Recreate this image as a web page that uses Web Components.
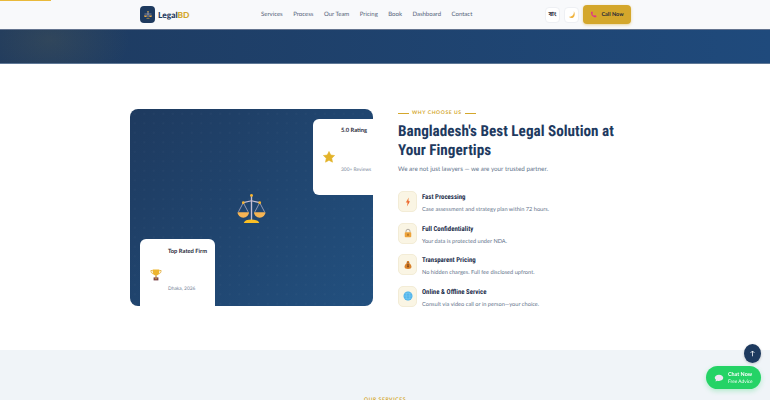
<!DOCTYPE html>
<html lang="en">
<head>
<meta charset="utf-8">
<title>LegalBD</title>
<style>
html, body { margin: 0; padding: 0; height: 400px; overflow: hidden; background: #fff; }
body { font-family: Lato, "Noto Sans", "Noto Sans Bengali", sans-serif; color: #1e3a5f; text-rendering: geometricPrecision; }
</style>
</head>
<body>
<site-header></site-header>
<page-hero></page-hero>
<why-section>
  <feature-row title="Fast Processing" text="Case assessment and strategy plan within 72 hours.">
    <svg viewBox="0 0 20 20" width="10" height="10"><path d="M11.500 1 5.500 11h3.600L7.800 19l6.400-10.600h-3.600z" fill="#f0803c"/><path d="M10.500 6 8.800 10.600h1.600L9.600 14.500l2.600-5h-1.600z" fill="#e8452c"/></svg>
  </feature-row>
  <feature-row title="Full Confidentiality" text="Your data is protected under NDA.">
    <svg viewBox="0 0 20 20" width="10" height="10"><path d="M6 9V6.500a4 4 0 0 1 8 0V9" fill="none" stroke="#a9a29a" stroke-width="1.800"/><rect x="3.500" y="8.500" width="13" height="10" rx="1.500" fill="#eda33a"/><rect x="9" y="11.500" width="2" height="4" fill="#8a5a20"/></svg>
  </feature-row>
  <feature-row title="Transparent Pricing" text="No hidden charges. Full fee disclosed upfront.">
    <svg viewBox="0 0 20 20" width="10" height="10"><path d="M7.500 2h5l-1.300 3.400c3.400 1.600 5.800 5 5.800 8.100 0 3.200-2.700 4.500-7 4.500s-7-1.300-7-4.500c0-3.100 2.400-6.500 5.800-8.100z" fill="#d9822b"/><rect x="7.200" y="4.800" width="5.600" height="1.400" fill="#8f4f1e"/><path d="M10 8v7M8 10h4M8 13h4" stroke="#6b3a15" stroke-width="1.200"/></svg>
  </feature-row>
  <feature-row title="Online &amp; Offline Service" text="Consult via video call or in person—your choice.">
    <svg viewBox="0 0 20 20" width="10" height="10"><circle cx="10" cy="10" r="9" fill="#4fb3ea"/><path d="M1 10h18M10 1c-5 5-5 13 0 18M10 1c5 5 5 13 0 18M3 5.500h14M3 14.500h14" fill="none" stroke="#8ad2f5" stroke-width="1"/></svg>
  </feature-row>
</why-section>
<services-strip></services-strip>
<float-actions></float-actions>

<template id="header-tpl">
  <style>
    :host { display: block; height: 29px; background: #f8f9fb; position: relative; }
    .progress { position: absolute; left: 0; top: 0; width: 51px; height: 1px; background: #e9b93a; }
    .bar { height: 100%; box-sizing: border-box; padding: 0 139px 0 140px; display: flex; align-items: center; }
    .logo { display: flex; align-items: center; gap: 3px; width: 49px; font-size: 8.400px; font-weight: 900; color: #1e3a5f; }
    .logo b { color: #d4a72c; font-weight: 900; }
    .mark { flex: none; width: 15px; height: 17px; border-radius: 4px; background: #1e3a5f; display: flex; align-items: center; justify-content: center; }
    nav { display: flex; gap: 10.500px; margin-left: 72px; font-size: 6px; color: #55637a; }
    .tools { margin-left: auto; display: flex; align-items: center; gap: 4px; }
    .tool { width: 15px; height: 16px; box-sizing: border-box; border: 1px solid #eef0f4; border-radius: 4px; background: #fff; display: flex; align-items: center; justify-content: center; font-size: 6px; font-weight: 700; color: #1f2937; font-family: "Noto Sans Bengali", "Noto Sans", sans-serif; }
    .call { height: 19px; width: 48px; box-sizing: border-box; border-radius: 4px; background: #d4a72c; box-shadow: 0 1px 3px rgba(212,167,44,.45); display: flex; align-items: center; justify-content: center; gap: 4px; font-size: 5.500px; font-weight: 700; color: #1f2937; }
  </style>
  <div class="progress"></div>
  <div class="bar">
    <div class="logo">
      <span class="mark"><svg viewBox="0 0 20 20" width="10" height="10"><path d="M10 3v11" stroke="#cfc6d8" stroke-width="1.200"/><circle cx="10" cy="3.500" r="1.300" fill="#f2b63a"/><path d="M3 8h14" stroke="#cfc6d8" stroke-width="1"/><path d="M2 11h6a3 3 0 0 1-6 0zM12 11h6a3 3 0 0 1-6 0z" fill="#f2b14a"/><path d="M6 17q4-3 8 0z" fill="#f2b63a"/></svg></span>
      <span>Legal<b>BD</b></span>
    </div>
    <nav><span>Services</span><span>Process</span><span>Our Team</span><span>Pricing</span><span>Book</span><span>Dashboard</span><span>Contact</span></nav>
    <div class="tools">
      <span class="tool">বাং</span>
      <span class="tool"><svg viewBox="0 0 20 20" width="9" height="9"><path d="M15 2c1.500 6-2 13-11 13 3 3 7 3.500 10 1.500 4-2.500 4-10 1-14.500z" fill="#f0b23c"/></svg></span>
      <span class="call"><svg viewBox="0 0 20 20" width="7" height="7"><path d="M3 2.500 6.500 1.500 8.500 6 6.500 7.800c.8 2.500 2.700 4.700 5.500 5.700L14 11.500 18.500 14 17.500 17.500C9 19 2 11 3 2.500z" fill="#e0338a"/></svg>Call Now</span>
    </div>
  </div>
</template>

<template id="hero-tpl">
  <style>
    :host { display: block; height: 35px; box-sizing: border-box; border-top: 1px solid #64748f; border-bottom: 1px solid #5f7896;
      background: radial-gradient(ellipse 80px 50px at 50px 10px, rgba(212,167,44,.1), transparent), linear-gradient(90deg, #1e3a5f 0%, #1f4a7c 100%); }
  </style>
</template>

<template id="why-tpl">
  <style>
    :host { display: block; height: 286px; box-sizing: border-box; padding: 45px 130px 0; background: #fff; }
    .grid { display: grid; grid-template-columns: 243px 1fr; gap: 25px; align-items: start; }
    .eyebrow { display: flex; align-items: center; gap: 3px; height: 8px; font-size: 5px; font-weight: 700; letter-spacing: .6px; color: #d4a72c; }
    .eyebrow i { display: block; width: 11px; height: 1px; background: #d4a72c; }
    h2 { margin: 5px 0 0; font-family: "Roboto Condensed", Lato, sans-serif; font-size: 15.200px; line-height: 19px; font-weight: 700; color: #1e3a5f; }
    p { margin: 5px 0 16px; font-size: 6.300px; line-height: 10px; color: #64748b; }
    .list { display: flex; flex-direction: column; gap: 10.500px; }
  </style>
  <div class="grid">
    <proof-visual></proof-visual>
    <div>
      <div class="eyebrow"><i></i>WHY CHOOSE US<i></i></div>
      <h2>Bangladesh's Best Legal Solution at Your Fingertips</h2>
      <p>We are not just lawyers — we are your trusted partner.</p>
      <div class="list"><slot></slot></div>
    </div>
  </div>
</template>

<template id="visual-tpl">
  <style>
    :host { display: block; height: 197px; position: relative; overflow: hidden; border-radius: 8px;
      background-color: #1f4373;
      background-image: radial-gradient(circle, rgba(255,255,255,.035) .6px, transparent .8px), linear-gradient(135deg, #1e3a5f 0%, #22507f 100%);
      background-size: 9.500px 9.500px, 100% 100%; }
    .center { height: 100%; display: flex; align-items: center; justify-content: center; }
    .tag { position: absolute; box-sizing: border-box; background: #fff; display: flex; align-items: center; gap: 6px; }
    .rating { right: 0; top: 10px; width: 60px; height: 76px; border-radius: 6px 0 0 6px; padding: 0 2px 0 10px; }
    .firm { left: 10px; bottom: 0; width: 75px; height: 67px; border-radius: 6px 6px 0 0; padding: 0 4px 0 10px; }
    .tag .col { flex: 1; align-self: stretch; display: flex; flex-direction: column; justify-content: space-between; white-space: nowrap; }
    .rating .col { padding: 7px 0 21px; }
    .firm .col { padding: 8px 0 13px; }
    .icon { flex: none; display: block; }
    .firm .icon { margin-top: 5px; }
    .tag b { font-size: 5.800px; line-height: 9px; font-weight: 700; color: #1f2937; }
    .tag small { font-size: 4.900px; line-height: 8px; color: #7a8699; }
  </style>
  <div class="center">
    <svg viewBox="0 0 30 32" width="29" height="32">
      <path d="M15 3v26" stroke="#c8bfd4" stroke-width="1.400"/>
      <path d="M6.500 10.500 15 8.500l8.500 2" fill="none" stroke="#c8bfd4" stroke-width="1.200"/>
      <path d="M6.500 10.500 1.500 20M6.500 10.500 11.500 20M23.500 10.500 18.500 20M23.500 10.500 28.500 20" fill="none" stroke="#c8bfd4" stroke-width=".7"/>
      <path d="M.5 20.500h12a6 5.500 0 0 1-12 0zM17.500 20.500h12a6 5.500 0 0 1-12 0z" fill="#f6b454"/>
      <circle cx="15" cy="3" r="1.500" fill="#f5b32f"/><circle cx="6.500" cy="10.500" r="1.400" fill="#f5b32f"/><circle cx="23.500" cy="10.500" r="1.400" fill="#f5b32f"/>
      <path d="M7 31.500q1-3.500 8-3.500t8 3.500z" fill="#fbbf24"/>
    </svg>
  </div>
  <div class="tag rating">
    <svg class="icon" viewBox="0 0 20 20" width="12" height="12"><path d="M10 .8l2.900 5.900 6.400.9-4.700 4.500 1.200 6.500L10 15.500l-5.800 3.100 1.200-6.500L.7 7.600l6.400-.9z" fill="#e3b32a" stroke="#e3b32a" stroke-linejoin="round"/></svg>
    <div class="col"><b>5.0 Rating</b><small>300+ Reviews</small></div>
  </div>
  <div class="tag firm">
    <svg class="icon" viewBox="0 0 20 20" width="12" height="12"><path d="M4.500 2.500H1.500c0 3.500 1.500 5 4 5.500M15.500 2.500h3c0 3.500-1.500 5-4 5.500" fill="none" stroke="#e0a52a" stroke-width="1.300"/><path d="M4.500 1h11v4c0 4-2.500 6-5.500 6S4.500 9 4.500 5z" fill="#eeb52f"/><rect x="9" y="10.500" width="2" height="3.500" fill="#c98f24"/><rect x="6" y="14" width="8" height="5" fill="#7a3f46"/><rect x="8" y="15.500" width="4" height="1.500" fill="#d9a441"/></svg>
    <div class="col"><b>Top Rated Firm</b><small>Dhaka, 2026</small></div>
  </div>
</template>

<template id="feature-tpl">
  <style>
    :host { display: flex; align-items: flex-start; gap: 5px; height: 21px; }
    .badge { flex: none; width: 19px; height: 21px; border-radius: 5px; background: #faf5e4; border: 1px solid #f3ecd6; box-sizing: border-box; display: flex; align-items: center; justify-content: center; }
    .title { font-family: "Roboto Condensed", Lato, sans-serif; font-size: 6.800px; line-height: 10px; font-weight: 700; color: #1e2f4d; margin-top: 1px; }
    .text { font-size: 5.650px; line-height: 8px; color: #64748b; margin-top: 4px; white-space: nowrap; }
    ::slotted(svg) { display: block; }
  </style>
  <div class="badge"><slot></slot></div>
  <div><div class="title" id="t"></div><div class="text" id="d"></div></div>
</template>

<template id="strip-tpl">
  <style>
    :host { display: block; height: 50px; background: #f0f4f8; text-align: center; }
    div { padding-top: 46px; font-size: 5px; line-height: 8px; font-weight: 700; letter-spacing: .6px; color: #d4a72c; }
  </style>
  <div>OUR SERVICES</div>
</template>

<template id="float-tpl">
  <style>
    :host { display: block; }
    .up { position: fixed; left: 744px; top: 344px; width: 17px; height: 19px; border-radius: 50%; background: #1e3a5f; display: flex; align-items: center; justify-content: center; box-shadow: 0 1px 3px rgba(0,0,0,.2); }
    .chat { position: fixed; left: 706px; top: 366px; width: 55px; height: 23px; border-radius: 12px; background: #25d366; display: flex; align-items: center; gap: 4px; padding-left: 8px; box-sizing: border-box; color: #fff; box-shadow: 0 2px 5px rgba(37,211,102,.3); }
    .chat svg { flex: none; display: block; }
    .chat b { display: block; font-size: 5.400px; line-height: 8px; font-weight: 700; }
    .chat small { display: block; font-size: 4.800px; line-height: 6px; }
  </style>
  <div class="up"><svg viewBox="0 0 10 10" width="7" height="7"><path d="M5 9V1.500M2.200 4.200 5 1.400l2.800 2.800" fill="none" stroke="#fff" stroke-width="1.100"/></svg></div>
  <div class="chat">
    <svg viewBox="0 0 20 20" width="10" height="10"><path d="M10 3.500c5 0 8.500 2.700 8.500 6.200s-3.500 6.200-8.500 6.200c-1.200 0-2.300-.2-3.300-.5L3 17l.9-3.300C2.300 12.700 1.500 11.300 1.500 9.700 1.500 6.200 5 3.500 10 3.500z" fill="#efe6f4"/></svg>
    <div><b>Chat Now</b><small>Free Advice</small></div>
  </div>
</template>

<script>
function shadowFrom(el, id) {
  const root = el.attachShadow({mode: 'open'});
  root.appendChild(document.getElementById(id).content.cloneNode(true));
  return root;
}

class SiteHeader extends HTMLElement {
  constructor(){ super(); shadowFrom(this, 'header-tpl'); }
}
class PageHero extends HTMLElement {
  constructor(){ super(); shadowFrom(this, 'hero-tpl'); }
}
class WhySection extends HTMLElement {
  constructor(){ super(); shadowFrom(this, 'why-tpl'); }
}
class ProofVisual extends HTMLElement {
  constructor(){ super(); shadowFrom(this, 'visual-tpl'); }
}
class FeatureRow extends HTMLElement {
  constructor(){ super(); shadowFrom(this, 'feature-tpl'); }
  connectedCallback(){
    this.shadowRoot.getElementById('t').textContent = this.getAttribute('title');
    this.shadowRoot.getElementById('d').textContent = this.getAttribute('text');
  }
}
class ServicesStrip extends HTMLElement {
  constructor(){ super(); shadowFrom(this, 'strip-tpl'); }
}
class FloatActions extends HTMLElement {
  constructor(){ super(); shadowFrom(this, 'float-tpl'); }
}

customElements.define('site-header', SiteHeader);
customElements.define('page-hero', PageHero);
customElements.define('proof-visual', ProofVisual);
customElements.define('why-section', WhySection);
customElements.define('feature-row', FeatureRow);
customElements.define('services-strip', ServicesStrip);
customElements.define('float-actions', FloatActions);
</script>
</body>
</html>
